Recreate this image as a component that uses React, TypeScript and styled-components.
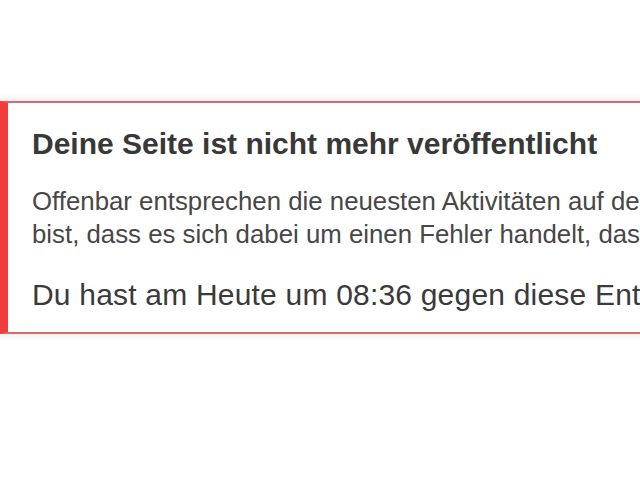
import React from "react";
import styled, { createGlobalStyle } from "styled-components";

const Global = createGlobalStyle`
  html, body { margin: 0; padding: 0; background: #ffffff; overflow: hidden; }
  body { font-family: "Liberation Sans", Arial, sans-serif; }
`;

const Page = styled.div`
  width: 640px;
  height: 480px;
  overflow: hidden;
  padding-top: 101px;
  box-sizing: border-box;
`;

const Notice = styled.section`
  width: 1300px;
  box-sizing: border-box;
  border: 2px solid #d96a6a;
  border-left: 8px solid #f23b3b;
  background: #ffffff;
  box-shadow: 0 0 5px 3px rgba(0, 0, 0, 0.07);
  padding: 23px 24px 19px 24px;
  display: flex;
  flex-direction: column;
`;

const Title = styled.h2`
  margin: 0 0 23px 0;
  font-size: 30px;
  line-height: 36px;
  font-weight: 700;
  color: #383838;
  white-space: nowrap;
`;

const Body = styled.p`
  margin: 0 0 26px 0;
  font-size: 25.8px;
  line-height: 33px;
  color: #474747;
  white-space: nowrap;
`;

const Status = styled.p`
  margin: 0;
  font-size: 30px;
  line-height: 36px;
  letter-spacing: 0.2px;
  color: #3a3a3a;
  white-space: nowrap;
`;

export default function App() {
  return (
    <>
      <Global />
      <Page>
        <Notice>
          <Title>Deine Seite ist nicht mehr veröffentlicht</Title>
          <Body>
            Offenbar entsprechen die neuesten Aktivitäten auf deiner Seite nicht unseren Gemeinschaftsstandards. Wenn du der Meinung
            <br />
            bist, dass es sich dabei um einen Fehler handelt, dass kannst du Einspruch einlegen.
          </Body>
          <Status>Du hast am Heute um 08:36 gegen diese Entscheidung Einspruch erhoben.</Status>
        </Notice>
      </Page>
    </>
  );
}
